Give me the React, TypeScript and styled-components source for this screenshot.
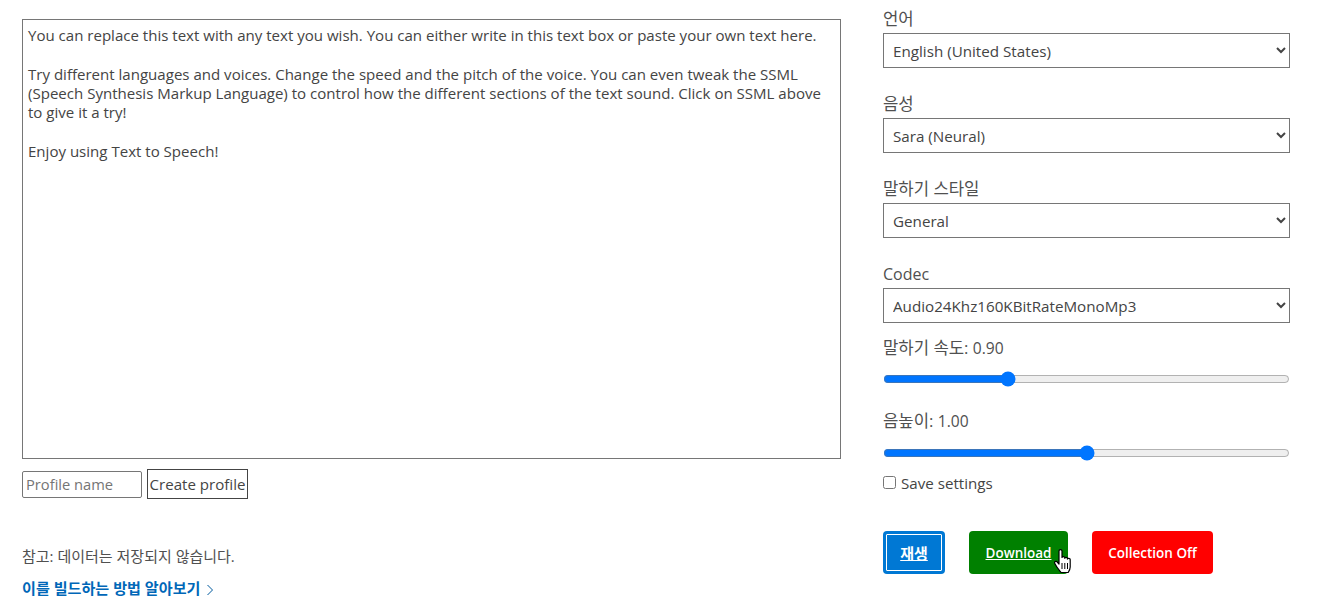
import React from "react"
import styled, { createGlobalStyle } from "styled-components"

const FONT = `"Open Sans", "Noto Sans CJK KR", sans-serif`

const GlobalStyle = createGlobalStyle`
  html, body {
    margin: 0;
    padding: 0;
    background: #fff;
    overflow: hidden;
  }
  body {
    font-family: ${FONT};
    color: #444;
  }
`

const Page = styled.div`
  width: 1336px;
  height: 606px;
  display: grid;
  grid-template-columns: 819px 407px;
  column-gap: 42px;
  padding-left: 22px;
  box-sizing: border-box;
`

const LeftColumn = styled.div`
  display: flex;
  flex-direction: column;
  padding-top: 19px;
`

const SpeechText = styled.textarea`
  width: 819px;
  height: 440px;
  box-sizing: border-box;
  margin: 0;
  padding: 6px 5px 0;
  border: 1px solid #767676;
  border-radius: 0;
  outline: none;
  resize: none;
  overflow: hidden;
  font-family: ${FONT};
  font-size: 15.05px;
  line-height: 19.3px;
  color: #444;
`

const ProfileRow = styled.div`
  display: flex;
  align-items: center;
  gap: 5px;
  margin-top: 10px;
  height: 30px;
`

const ProfileInput = styled.input`
  width: 120px;
  height: 27px;
  box-sizing: border-box;
  margin: 0;
  padding: 0 3px;
  border: 1px solid #767676;
  border-radius: 2px;
  font-family: ${FONT};
  font-size: 14.7px;
  color: #444;
  &::placeholder {
    color: #757575;
  }
`

const ProfileButton = styled.button`
  width: 101px;
  height: 30px;
  box-sizing: border-box;
  margin: 0;
  padding: 0;
  background: #fff;
  border: 1px solid #444;
  font-family: ${FONT};
  font-size: 15.1px;
  color: #444;
`

const Note = styled.p`
  margin: 48px 0 0;
  font-size: 15px;
  line-height: 18px;
  color: #505050;
`

const LearnLink = styled.a`
  display: flex;
  align-items: center;
  gap: 6px;
  margin-top: 14px;
  font-size: 15.1px;
  line-height: 18px;
  font-weight: 600;
  color: #0067b8;
  text-decoration: none;
  svg {
    display: block;
    margin-top: 3px;
  }
`

const RightColumn = styled.div`
  display: flex;
  flex-direction: column;
  padding-top: 8px;
`

const Field = styled.div<{ $gap: number }>`
  display: flex;
  flex-direction: column;
  margin-bottom: ${(p) => p.$gap}px;
`

const FieldLabel = styled.label<{ $latin?: boolean }>`
  height: 25px;
  padding-top: ${(p) => (p.$latin ? 1 : 0)}px;
  box-sizing: border-box;
  font-size: ${(p) => (p.$latin ? 16 : 16.7)}px;
  line-height: 21px;
  color: #505050;
`

const Picker = styled.select`
  width: 407px;
  height: 35px;
  box-sizing: border-box;
  margin: 0;
  padding: 1px 5px 0;
  background: #fff;
  border: 1px solid #767676;
  border-radius: 0;
  font-family: ${FONT};
  font-size: 15.2px;
  color: #444;
`

const SliderField = styled.div<{ $height: number }>`
  display: flex;
  flex-direction: column;
  height: ${(p) => p.$height}px;
`

const SliderLabel = styled.label`
  height: 21px;
  font-size: 16.7px;
  line-height: 21px;
  color: #505050;
`

const SliderValue = styled.span`
  font-size: 15.6px;
`

const Slider = styled.input<{ $top: number }>`
  width: 407px;
  height: 16px;
  margin: ${(p) => p.$top}px 0 0;
  accent-color: #0075ff;
`

const SaveRow = styled.label`
  display: flex;
  align-items: center;
  gap: 5px;
  height: 21px;
  margin-top: 11px;
  font-size: 15.15px;
  color: #444;
  input {
    width: 13px;
    height: 13px;
    margin: 0;
  }
`

const ButtonRow = styled.div`
  display: flex;
  gap: 24px;
  margin-top: 38px;
`

const ActionButton = styled.button<{ $bg: string; $width: number; $focused?: boolean; $underline?: boolean }>`
  position: relative;
  width: ${(p) => p.$width}px;
  height: 43px;
  box-sizing: border-box;
  margin: 0;
  padding: 0;
  border: none;
  border-radius: 4px;
  background: ${(p) => p.$bg};
  color: #fff;
  font-family: ${FONT};
  font-size: ${(p) => (p.$focused ? 15 : 13.5)}px;
  font-weight: 600;
  text-decoration: ${(p) => (p.$underline ? "underline" : "none")};
  outline: ${(p) => (p.$focused ? "1px solid #fff" : "none")};
  outline-offset: -4px;
`

const Cursor = styled.svg`
  position: absolute;
  left: 85px;
  top: 17px;
  width: 18px;
  height: 26px;
`

const PICKERS = [
  { label: "언어", options: ["English (United States)"] },
  { label: "음성", options: ["Sara (Neural)"] },
  { label: "말하기 스타일", options: ["General"] },
  { label: "Codec", options: ["Audio24Khz160KBitRateMonoMp3"], latin: true }
]

const TEXT = `You can replace this text with any text you wish. You can either write in this text box or paste your own text here.

Try different languages and voices. Change the speed and the pitch of the voice. You can even tweak the SSML (Speech Synthesis Markup Language) to control how the different sections of the text sound. Click on SSML above to give it a try!

Enjoy using Text to Speech!`

const App = () => {
  return (
    <>
      <GlobalStyle />
      <Page>
        <LeftColumn>
          <SpeechText defaultValue={TEXT} spellCheck={false} />
          <ProfileRow>
            <ProfileInput placeholder="Profile name" />
            <ProfileButton>Create profile</ProfileButton>
          </ProfileRow>
          <Note>참고: 데이터는 저장되지 않습니다.</Note>
          <LearnLink href="#">
            이를 빌드하는 방법 알아보기
            <svg width="8" height="12" viewBox="0 0 8 12" fill="none" stroke="#005a9e" strokeWidth="1">
              <path d="M1.5 1l5 5-5 5" />
            </svg>
          </LearnLink>
        </LeftColumn>
        <RightColumn>
          {PICKERS.map((p, index) => (
            <Field key={index} $gap={index === 3 ? 14 : 25}>
              <FieldLabel $latin={p.latin}>{p.label}</FieldLabel>
              <Picker defaultValue={p.options[0]}>
                {p.options.map((o) => (
                  <option key={o}>{o}</option>
                ))}
              </Picker>
            </Field>
          ))}
          <SliderField $height={73}>
            <SliderLabel>
              말하기 속도: <SliderValue>0.90</SliderValue>
            </SliderLabel>
            <Slider $top={13} type="range" min={0} max={3} step={0.01} defaultValue={0.9} />
          </SliderField>
          <SliderField $height={51}>
            <SliderLabel>
              음높이: <SliderValue>1.00</SliderValue>
            </SliderLabel>
            <Slider $top={14} type="range" min={0} max={2} step={0.01} defaultValue={1} />
          </SliderField>
          <SaveRow>
            <input type="checkbox" />
            Save settings
          </SaveRow>
          <ButtonRow>
            <ActionButton $bg="#0078d4" $width={62} $focused $underline>
              재생
            </ActionButton>
            <ActionButton $bg="#008000" $width={99} $underline>
              Download
              <Cursor viewBox="0 0 18 26">
                <path
                  d="M5 3c0-1.8 3-1.8 3 0v6.5c0-1.2 2.8-1.2 2.8 0v.8c0-1.2 2.6-1.2 2.6 0v.8c0-1.2 2.8-1 2.8.3V19c0 2.5-1 4-2 5.5H7C5.5 22.5 2.5 19 .8 15.5c-.8-1.6 1.2-3 2.4-1.5L5 16z"
                  fill="#fff"
                  stroke="#000"
                  strokeWidth="1.2"
                  strokeLinejoin="round"
                />
                <path d="M8 15v6M10.8 15v6M13.5 15v6" stroke="#000" strokeWidth="1" />
              </Cursor>
            </ActionButton>
            <ActionButton $bg="#ff0000" $width={121}>
              Collection Off
            </ActionButton>
          </ButtonRow>
        </RightColumn>
      </Page>
    </>
  )
}

export default App
